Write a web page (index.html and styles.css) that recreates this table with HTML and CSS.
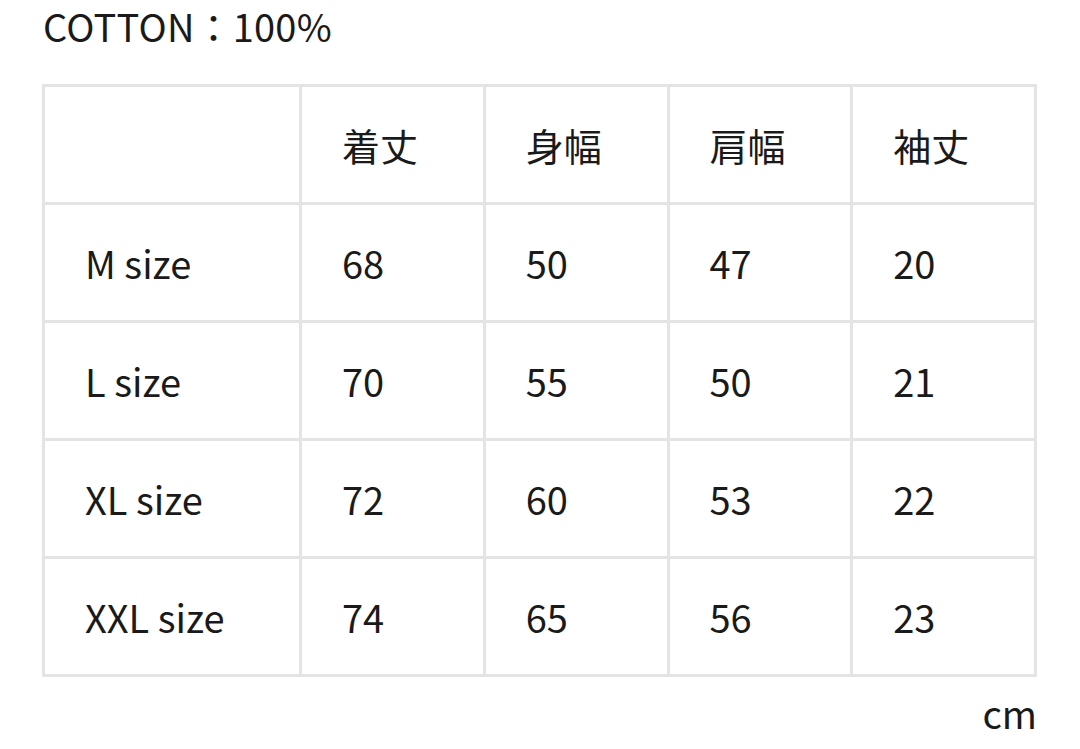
FILE: index.html
```html
<!DOCTYPE html>
<html lang="ja">
<head>
<meta charset="utf-8">
<link rel="stylesheet" href="styles.css">
</head>
<body>
<div class="page">
  <p class="material">COTTON：100%</p>
  <table class="size-table">
    <tr>
      <td class="label"></td>
      <td>着丈</td>
      <td>身幅</td>
      <td>肩幅</td>
      <td>袖丈</td>
    </tr>
    <tr>
      <td class="label">M size</td>
      <td>68</td><td>50</td><td>47</td><td>20</td>
    </tr>
    <tr>
      <td class="label">L size</td>
      <td>70</td><td>55</td><td>50</td><td>21</td>
    </tr>
    <tr>
      <td class="label">XL size</td>
      <td>72</td><td>60</td><td>53</td><td>22</td>
    </tr>
    <tr>
      <td class="label">XXL size</td>
      <td>74</td><td>65</td><td>56</td><td>23</td>
    </tr>
  </table>
  <p class="unit">cm</p>
</div>
</body>
</html>
```
FILE: styles.css
```css
html, body {
  margin: 0;
  padding: 0;
  background: #ffffff;
}
body {
  font-family: "Noto Sans CJK JP", "Noto Sans", sans-serif;
  color: #1a1a1a;
}
.page {
  width: 995px;
  padding: 0 0 0 42px;
}
.material {
  margin: 0;
  height: 58px;
  line-height: 52px;
  font-size: 38px;
  padding-left: 1px;
  letter-spacing: 0.2px;
}
.size-table {
  margin-top: 26px;
  width: 995px;
  border-collapse: collapse;
  table-layout: fixed;
}
.size-table td {
  border: 3px solid #e4e4e4;
  height: 115px;
  padding: 0 0 0 40px;
  font-size: 38px;
  vertical-align: middle;
  text-align: left;
}
.size-table td.label {
  width: 214px;
  padding-left: 40px;
}
.unit {
  margin: 12px 0 0 0;
  text-align: right;
  font-size: 38px;
  line-height: 48px;
}
```
